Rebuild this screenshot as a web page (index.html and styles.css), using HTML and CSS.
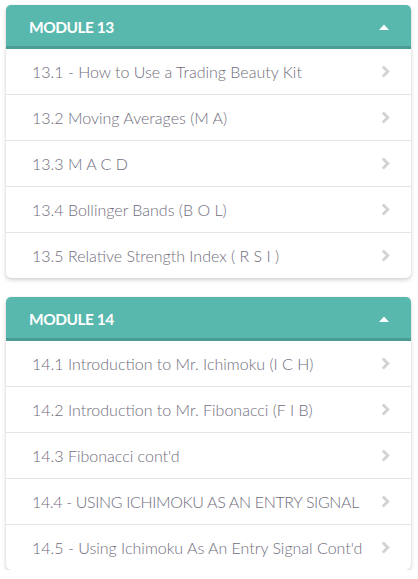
FILE: index.html
```html
<!DOCTYPE html>
<html>
<head>
<meta charset="utf-8">
<link rel="stylesheet" href="styles.css">
</head>
<body>
<div class="page">
  <section class="module">
    <div class="module-head">
      <span class="module-title">MODULE 13</span>
      <svg class="caret" width="10" height="6" viewBox="0 0 10 6"><path d="M0 6 L5 0.5 L10 6 Z" fill="#fff"/></svg>
    </div>
    <ul class="lessons">
      <li class="lesson"><span>13.1 - How to Use a Trading Beauty Kit</span><svg class="chev" width="9" height="13" viewBox="0 0 9 13"><path d="M1.8 1.5 L6.8 6.5 L1.8 11.5" fill="none" stroke="#d2d2d2" stroke-width="2.8"/></svg></li>
      <li class="lesson"><span>13.2 Moving Averages (M A)</span><svg class="chev" width="9" height="13" viewBox="0 0 9 13"><path d="M1.8 1.5 L6.8 6.5 L1.8 11.5" fill="none" stroke="#d2d2d2" stroke-width="2.8"/></svg></li>
      <li class="lesson"><span>13.3 M A C D</span><svg class="chev" width="9" height="13" viewBox="0 0 9 13"><path d="M1.8 1.5 L6.8 6.5 L1.8 11.5" fill="none" stroke="#d2d2d2" stroke-width="2.8"/></svg></li>
      <li class="lesson"><span>13.4 Bollinger Bands (B O L)</span><svg class="chev" width="9" height="13" viewBox="0 0 9 13"><path d="M1.8 1.5 L6.8 6.5 L1.8 11.5" fill="none" stroke="#d2d2d2" stroke-width="2.8"/></svg></li>
      <li class="lesson"><span>13.5 Relative Strength Index ( R S I )</span><svg class="chev" width="9" height="13" viewBox="0 0 9 13"><path d="M1.8 1.5 L6.8 6.5 L1.8 11.5" fill="none" stroke="#d2d2d2" stroke-width="2.8"/></svg></li>
    </ul>
  </section>
  <section class="module">
    <div class="module-head">
      <span class="module-title">MODULE 14</span>
      <svg class="caret" width="10" height="6" viewBox="0 0 10 6"><path d="M0 6 L5 0.5 L10 6 Z" fill="#fff"/></svg>
    </div>
    <ul class="lessons">
      <li class="lesson"><span>14.1 Introduction to Mr. Ichimoku (I C H)</span><svg class="chev" width="9" height="13" viewBox="0 0 9 13"><path d="M1.8 1.5 L6.8 6.5 L1.8 11.5" fill="none" stroke="#d2d2d2" stroke-width="2.8"/></svg></li>
      <li class="lesson"><span>14.2 Introduction to Mr. Fibonacci (F I B)</span><svg class="chev" width="9" height="13" viewBox="0 0 9 13"><path d="M1.8 1.5 L6.8 6.5 L1.8 11.5" fill="none" stroke="#d2d2d2" stroke-width="2.8"/></svg></li>
      <li class="lesson"><span>14.3 Fibonacci cont'd</span><svg class="chev" width="9" height="13" viewBox="0 0 9 13"><path d="M1.8 1.5 L6.8 6.5 L1.8 11.5" fill="none" stroke="#d2d2d2" stroke-width="2.8"/></svg></li>
      <li class="lesson"><span class="caps">14.4 - USING ICHIMOKU AS AN ENTRY SIGNAL</span><svg class="chev" width="9" height="13" viewBox="0 0 9 13"><path d="M1.8 1.5 L6.8 6.5 L1.8 11.5" fill="none" stroke="#d2d2d2" stroke-width="2.8"/></svg></li>
      <li class="lesson"><span>14.5 - Using Ichimoku As An Entry Signal Cont'd</span><svg class="chev" width="9" height="13" viewBox="0 0 9 13"><path d="M1.8 1.5 L6.8 6.5 L1.8 11.5" fill="none" stroke="#d2d2d2" stroke-width="2.8"/></svg></li>
    </ul>
  </section>
</div>
</body>
</html>
```
FILE: styles.css
```css
* { box-sizing: border-box; }
html, body { margin: 0; padding: 0; background: #fff; }
body { font-family: "Lato", "Open Sans", sans-serif; }
.page {
  width: 418px;
  padding: 5px 7px 0 6px;
  display: flex;
  flex-direction: column;
  gap: 19px;
}
.module {
  background: #fff;
  border-radius: 5px;
  box-shadow: 0 2px 4px rgba(0,0,0,0.18), 0 0 1px rgba(0,0,0,0.12);
  overflow: hidden;
}
.module-head {
  height: 44px;
  background: #58b8ad;
  border-bottom: 3px solid #4a9d94;
  display: flex;
  align-items: center;
  justify-content: space-between;
  padding: 3px 22px 0 23px;
}
.module-title {
  color: #fff;
  font-size: 15.5px;
  font-weight: 700;
  letter-spacing: -0.5px;
}
.caret { display: block; }
.lessons { list-style: none; margin: 0; padding: 0; }
.lesson {
  height: 46px;
  display: flex;
  align-items: center;
  justify-content: space-between;
  padding: 0 21px 0 26px;
  border-top: 1px solid #e4e4e4;
  color: #6f6d7c;
  font-size: 16px;
  font-weight: 300;
}
.lesson:first-child { border-top: none; height: 45px; }
.caps { letter-spacing: -0.35px; }
.chev { display: block; }
```
